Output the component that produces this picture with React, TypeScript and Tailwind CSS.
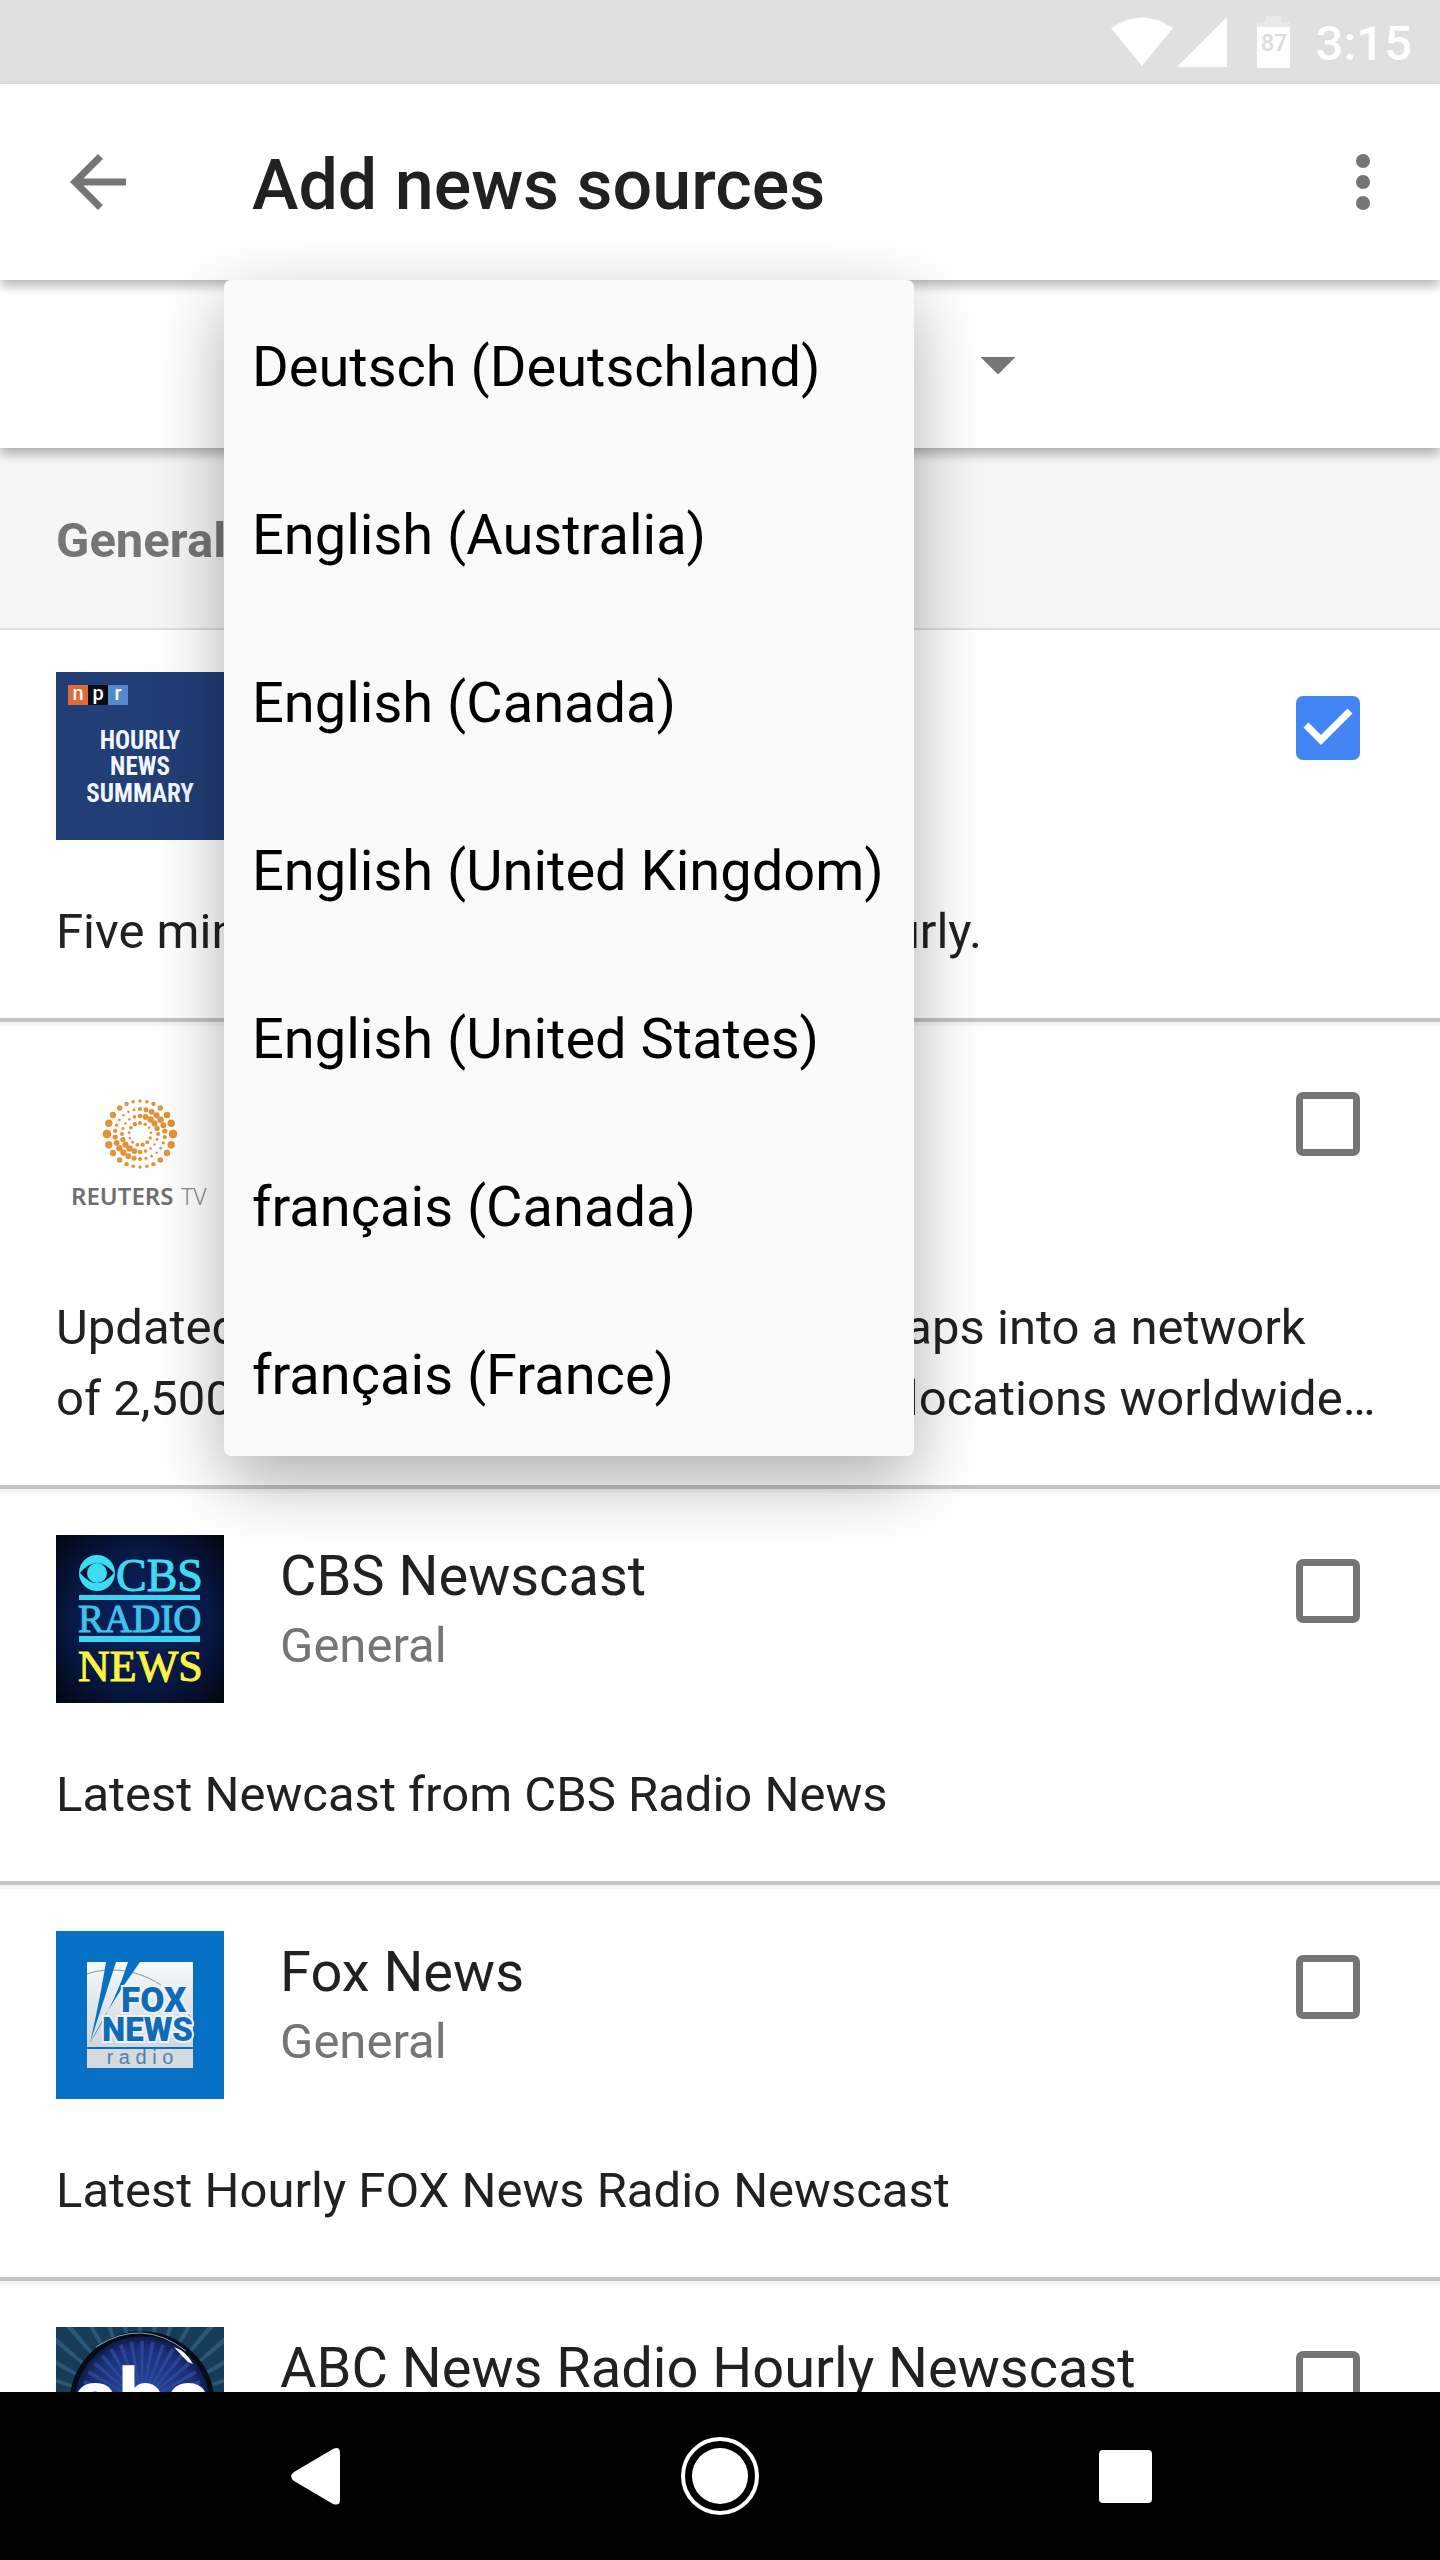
import { useState } from "react"

const languages = [
  "Deutsch (Deutschland)",
  "English (Australia)",
  "English (Canada)",
  "English (United Kingdom)",
  "English (United States)",
  "français (Canada)",
  "français (France)",
]

function NprLogo() {
  return (
    <svg viewBox="0 0 168 168" className="size-[168px] shrink-0" role="img" aria-label="NPR">
      <rect width="168" height="168" fill="#213e76" />
      <rect x="12" y="13" width="20" height="20" fill="#e2683a" />
      <rect x="32" y="13" width="20" height="20" fill="#0a0a14" />
      <rect x="52" y="13" width="20" height="20" fill="#5489cf" />
      <g fill="#fff" fontFamily="Roboto, sans-serif" fontSize="20" fontWeight="500" textAnchor="middle">
        <text x="22" y="28">n</text>
        <text x="42" y="28">p</text>
        <text x="62" y="28">r</text>
      </g>
      <g
        fill="#f1f6ff"
        fontFamily="'Roboto Condensed', 'Liberation Sans Narrow', Roboto, sans-serif"
        fontSize="25"
        fontWeight="700"
        textAnchor="middle"
      >
        <text x="84" y="77">HOURLY</text>
        <text x="84" y="103">NEWS</text>
        <text x="84" y="130">SUMMARY</text>
      </g>
    </svg>
  )
}

const outerAngles = [0, 12, 24, 38, 55, 71, 90]
const outerSizes = [1.5, 1.8, 2.2, 2.7, 3.2, 3.7, 4.2]
const innerRings = [
  { radius: 25, count: 26, peak: 50, min: 1.2, max: 3.2 },
  { radius: 18, count: 20, peak: 40, min: 1.2, max: 3.2 },
  { radius: 11, count: 13, peak: -20, min: 1.2, max: 2.2 },
]

function ReutersLogo() {
  const dots: { x: number; y: number; r: number }[] = []
  outerAngles.forEach((angle, i) => {
    const dx = Math.sin((angle * Math.PI) / 180) * 33
    const dy = Math.cos((angle * Math.PI) / 180) * 33
    for (const sx of [-1, 1]) {
      for (const sy of [-1, 1]) dots.push({ x: 84 + sx * dx, y: 66 + sy * dy, r: outerSizes[i] })
    }
  })
  for (const ring of innerRings) {
    for (let i = 0; i < ring.count; i++) {
      const angle = (i / ring.count) * Math.PI * 2
      const weight = Math.pow(Math.cos(angle - (ring.peak * Math.PI) / 180), 2)
      dots.push({
        x: 84 + Math.sin(angle) * ring.radius,
        y: 66 - Math.cos(angle) * ring.radius,
        r: ring.min + (ring.max - ring.min) * weight,
      })
    }
  }
  return (
    <svg viewBox="0 0 168 168" className="size-[168px] shrink-0" role="img" aria-label="Reuters TV">
      <g fill="#e2933a">
        {dots.map((d, i) => (
          <circle key={i} cx={d.x} cy={d.y} r={d.r} />
        ))}
      </g>
      <text x="15" y="137" fill="#6f6f6f" fontFamily="'Noto Sans', sans-serif" fontSize="24" fontWeight="600">
        REUTERS
      </text>
      <text x="125" y="137" fill="#8a8a8a" fontFamily="'Noto Sans', sans-serif" fontSize="23" fontWeight="300">
        TV
      </text>
    </svg>
  )
}

function CbsLogo() {
  return (
    <svg viewBox="0 0 168 168" className="size-[168px] shrink-0" role="img" aria-label="CBS Radio News">
      <defs>
        <radialGradient id="cbs" cx="0.5" cy="0.5" r="0.7">
          <stop offset="0" stopColor="#0a2360" />
          <stop offset="0.6" stopColor="#061742" />
          <stop offset="1" stopColor="#020611" />
        </radialGradient>
      </defs>
      <rect width="168" height="168" fill="url(#cbs)" />
      <circle cx="41" cy="38" r="18" fill="#3cdcf2" />
      <path d="M24 38Q41 18 58 38Q41 58 24 38Z" fill="#06143a" />
      <circle cx="41" cy="38" r="10" fill="#3cdcf2" />
      <g fontFamily="'Liberation Serif', serif">
        <text x="60" y="56" fontSize="46" fill="#3cdcf2" stroke="#3cdcf2">CBS</text>
        <text x="22" y="97" fontSize="39" fill="#3cc4ec" stroke="#3cc4ec">RADIO</text>
        <text x="22" y="146" fontSize="44" fill="#fdf340" stroke="#fdf340">NEWS</text>
      </g>
      <rect x="23" y="60" width="121" height="5" fill="#3cd3f2" />
      <rect x="23" y="101" width="121" height="6" fill="#3cd3f2" />
    </svg>
  )
}

function FoxLogo() {
  return (
    <svg viewBox="0 0 168 168" className="size-[168px] shrink-0" role="img" aria-label="Fox News Radio">
      <defs>
        <linearGradient id="fox" x1="0" y1="0" x2="0" y2="1">
          <stop offset="0" stopColor="#f6f8fa" />
          <stop offset="1" stopColor="#cfd6dd" />
        </linearGradient>
      </defs>
      <rect width="168" height="168" fill="#0570c4" />
      <rect x="31" y="31" width="106" height="85" fill="url(#fox)" />
      <rect x="31" y="118" width="106" height="19" fill="#d5dade" />
      <path d="M31 43C62 32 112 42 137 91" fill="none" stroke="#8494a4" />
      <path d="M50 31H60L34 112Q44 68 50 31Z" fill="#0570c4" />
      <path d="M72 31H84L66 57L48 86L34 112Q60 70 72 31Z" fill="#0570c4" />
      <g
        fill="#0f6bb8"
        stroke="#eef2f5"
        strokeWidth="4"
        paintOrder="stroke"
        fontFamily="Roboto, sans-serif"
        fontWeight="900"
      >
        <text x="65" y="81" fontSize="35">FOX</text>
        <text x="46" y="110" fontSize="33">NEWS</text>
      </g>
      <text x="84" y="133" fill="#4d80ad" fontFamily="'Liberation Sans', sans-serif" fontSize="20" textAnchor="middle">
        r a d i o
      </text>
    </svg>
  )
}

function AbcLogo() {
  const rays = Array.from({ length: 36 }, (_, i) => i * 10)
  return (
    <svg viewBox="0 0 168 168" className="size-[168px] shrink-0" role="img" aria-label="ABC News">
      <defs>
        <radialGradient id="abc" cx="0.5" cy="0.5" r="0.5">
          <stop offset="0" stopColor="#2c4fa8" />
          <stop offset="0.8" stopColor="#1a2f78" />
          <stop offset="1" stopColor="#0b1742" />
        </radialGradient>
      </defs>
      <rect width="168" height="168" fill="#173c58" />
      {rays.map((a) => (
        <path key={a} d="M84 84L81 -50H87Z" fill="#2a5876" transform={`rotate(${a} 84 84)`} />
      ))}
      <circle cx="86" cy="77" r="70" fill="url(#abc)" stroke="#050c18" strokeWidth="5" />
      {rays.map((a) => (
        <path key={a} d="M86 76L84 14H88Z" fill="#3354a8" opacity="0.6" transform={`rotate(${a} 86 76)`} />
      ))}
      <path d="M40 20Q86 -10 130 24" fill="none" stroke="#8fa3b4" strokeWidth="1" />
      <path d="M118 20Q130 24 137 37L132 35Q125 28 118 20Z" fill="#fff" />
      <text x="85" y="101" fill="#fff" fontFamily="Roboto, sans-serif" fontSize="84" fontWeight="700" textAnchor="middle">
        abc
      </text>
    </svg>
  )
}

const sources = [
  {
    id: "npr",
    name: "NPR News Now",
    category: "General",
    description: "Five minutes of NPR news, updated hourly.",
    logo: <NprLogo />,
  },
  {
    id: "reuters",
    name: "Reuters TV",
    category: "General",
    description:
      "Updated every single hour, Reuters TV taps into a network of\u00a02,500 reporters across 200 different locations worldwide…",
    logo: <ReutersLogo />,
  },
  {
    id: "cbs",
    name: "CBS Newscast",
    category: "General",
    description: "Latest Newcast from CBS Radio News",
    logo: <CbsLogo />,
  },
  {
    id: "fox",
    name: "Fox News",
    category: "General",
    description: "Latest Hourly FOX News Radio Newscast",
    logo: <FoxLogo />,
  },
  {
    id: "abc",
    name: "ABC News Radio Hourly Newscast",
    category: "General",
    description: "Latest Hourly ABC News Radio Newscast",
    logo: <AbcLogo />,
  },
]

function StatusBar() {
  return (
    <div className="flex h-[84px] shrink-0 items-center justify-end bg-[#e0e0e0] pr-7 text-white">
      <svg viewBox="0 0 62 50" className="mr-1 h-[50px] w-[62px]" fill="currentColor">
        <path d="M0 11Q31 -10 62 11L31 49Z" />
      </svg>
      <svg viewBox="0 0 50 50" className="mr-[30px] size-[50px]" fill="currentColor">
        <path d="M50 0V50H0Z" />
      </svg>
      <svg viewBox="0 0 33 54" className="mr-[26px] h-[54px] w-[33px]" fill="currentColor">
        <path d="M9 1H24V7H33V13H0V7H9Z" opacity="0.3" />
        <path d="M0 12H33V53H0Z" />
        <text x="17" y="36" fill="#dcdcdc" fontFamily="Roboto, sans-serif" fontSize="23" fontWeight="500" textAnchor="middle">
          87
        </text>
      </svg>
      <span className="pt-1 text-[49px] leading-[58px] font-medium">3:15</span>
    </div>
  )
}

export default function App() {
  const [language, setLanguage] = useState("English (United States)")
  const [open, setOpen] = useState(true)
  const [selected, setSelected] = useState<string[]>(["npr"])

  function toggle(id: string) {
    setSelected(selected.includes(id) ? selected.filter((s) => s !== id) : [...selected, id])
  }

  return (
    <div className="flex h-screen flex-col overflow-hidden bg-white font-[Roboto,sans-serif] text-[#212121]">
      <StatusBar />

      <header className="relative z-20 flex h-[196px] shrink-0 items-center bg-white pr-[35px] pl-14 shadow-[0_6px_10px_rgba(0,0,0,0.28)]">
        <button aria-label="Back" className="text-[#757575]">
          <svg viewBox="0 0 24 24" className="size-[84px]" fill="currentColor">
            <path d="M20 11H7.83l5.59-5.59L12 4l-8 8 8 8 1.41-1.41L7.83 13H20v-2z" />
          </svg>
        </button>
        <h1 className="ml-28 flex-1 pt-1.5 text-[70px] leading-[84px] font-medium">Add news sources</h1>
        <button aria-label="More options" className="text-[#757575]">
          <svg viewBox="0 0 24 24" className="size-[84px]" fill="currentColor">
            <circle cx="12" cy="6" r="2" />
            <circle cx="12" cy="12" r="2" />
            <circle cx="12" cy="18" r="2" />
          </svg>
        </button>
      </header>

      <div className="relative z-10 h-[168px] shrink-0 bg-white pl-56 shadow-[0_6px_10px_rgba(0,0,0,0.28)]">
        <div className="flex h-full w-[816px] items-center">
          <select
            aria-label="Language"
            value={language}
            onChange={(e) => setLanguage(e.target.value)}
            className="h-full min-w-0 flex-1 appearance-none bg-transparent pl-7 text-[56px] outline-none"
          >
            {languages.map((l) => (
              <option key={l} value={l}>
                {l}
              </option>
            ))}
          </select>
          <button aria-label="Show languages" onClick={() => setOpen(!open)} className="text-[#757575]">
            <svg viewBox="0 0 24 24" className="size-[84px]" fill="currentColor">
              <path d="M7 10l5 5 5-5z" />
            </svg>
          </button>
        </div>
      </div>

      {open && (
        <ul className="absolute top-[280px] left-56 z-30 w-[690px] rounded-[7px] bg-[#fafafa] text-black shadow-[0_24px_70px_rgba(0,0,0,0.32)]">
          {languages.map((l) => (
            <li key={l}>
              <button
                onClick={() => {
                  setLanguage(l)
                  setOpen(false)
                }}
                className="flex h-[168px] w-full items-center px-7 pt-1.5 text-[56px] leading-[70px] whitespace-nowrap"
              >
                {l}
              </button>
            </li>
          ))}
        </ul>
      )}

      <main className="min-h-0 flex-1 overflow-hidden bg-[#f5f5f5]">
        <h2 className="flex h-[182px] items-center border-b-2 border-[#dedede] px-14 pt-1 text-[49px] leading-[71px] font-bold text-[#757575]">
          General
        </h2>
        <ul className="flex flex-col gap-1">
          {sources.map((s) => (
            <li key={s.id} className="border-b-4 border-[#c4c4c4] bg-white px-14 pt-[42px] pb-[51px]">
              <label className="flex">
                {s.logo}
                <span className="ml-14 flex-1 pt-1.5">
                  <span className="block text-[56px] leading-[71px]">{s.name}</span>
                  <span className="block text-[49px] leading-[68px] text-[#757575]">{s.category}</span>
                </span>
                <span className="relative mt-6 mr-6 size-16">
                  <input
                    type="checkbox"
                    checked={selected.includes(s.id)}
                    onChange={() => toggle(s.id)}
                    className="block size-16 appearance-none rounded-[7px] border-[7px] border-[#757575] checked:border-[#4285f4] checked:bg-[#4285f4]"
                  />
                  {selected.includes(s.id) && (
                    <svg viewBox="0 0 64 64" className="pointer-events-none absolute inset-0" fill="none">
                      <path d="M10 29L25 44L54 15" stroke="#fff" strokeWidth="7" />
                    </svg>
                  )}
                </span>
              </label>
              <p className="mt-14 line-clamp-2 text-[49px] leading-[71px]">{s.description}</p>
            </li>
          ))}
        </ul>
      </main>

      <nav className="relative z-10 flex h-[168px] shrink-0 items-center justify-center gap-[322px] bg-black text-white">
        <button aria-label="Back">
          <svg viewBox="0 0 84 84" className="size-[84px]" fill="currentColor">
            <path d="M22 38L61 15Q68 12 68 19V66Q68 72 61 70L22 47Q16 42 22 38Z" />
          </svg>
        </button>
        <button aria-label="Home">
          <svg viewBox="0 0 84 84" className="size-[84px]" fill="currentColor">
            <circle cx="42" cy="42" r="28" />
            <circle cx="42" cy="42" r="37" fill="none" stroke="currentColor" strokeWidth="4" />
          </svg>
        </button>
        <button aria-label="Recent apps">
          <svg viewBox="0 0 84 84" className="size-[84px]" fill="currentColor">
            <rect x="15" y="16" width="53" height="53" rx="4" />
          </svg>
        </button>
      </nav>
    </div>
  )
}
